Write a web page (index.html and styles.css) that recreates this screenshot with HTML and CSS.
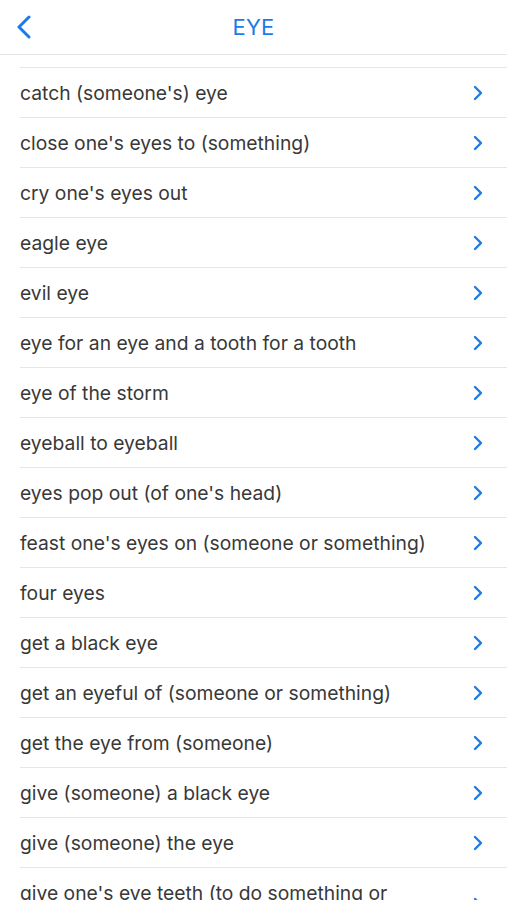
FILE: index.html
```html
<!DOCTYPE html>
<html>
<head>
<meta charset="utf-8">
<link rel="stylesheet" href="styles.css">
</head>
<body>
<header class="nav">
  <button class="back" aria-label="Back">
    <svg width="16" height="24" viewBox="0 0 16 24"><path d="M13 2 L3 12 L13 22" fill="none" stroke="#1c7be6" stroke-width="3" stroke-linecap="round" stroke-linejoin="round"/></svg>
  </button>
  <h1 class="title">EYE</h1>
</header>
<ul class="list">
  <li class="row"><span class="label">catch (someone's) eye</span><svg class="chev" width="10" height="16" viewBox="0 0 10 16"><path d="M2 2 L8 8 L2 14" fill="none" stroke="#1c7be6" stroke-width="2.4" stroke-linecap="round" stroke-linejoin="round"/></svg></li>
  <li class="row"><span class="label">close one's eyes to (something)</span><svg class="chev" width="10" height="16" viewBox="0 0 10 16"><path d="M2 2 L8 8 L2 14" fill="none" stroke="#1c7be6" stroke-width="2.4" stroke-linecap="round" stroke-linejoin="round"/></svg></li>
  <li class="row"><span class="label">cry one's eyes out</span><svg class="chev" width="10" height="16" viewBox="0 0 10 16"><path d="M2 2 L8 8 L2 14" fill="none" stroke="#1c7be6" stroke-width="2.4" stroke-linecap="round" stroke-linejoin="round"/></svg></li>
  <li class="row"><span class="label">eagle eye</span><svg class="chev" width="10" height="16" viewBox="0 0 10 16"><path d="M2 2 L8 8 L2 14" fill="none" stroke="#1c7be6" stroke-width="2.4" stroke-linecap="round" stroke-linejoin="round"/></svg></li>
  <li class="row"><span class="label">evil eye</span><svg class="chev" width="10" height="16" viewBox="0 0 10 16"><path d="M2 2 L8 8 L2 14" fill="none" stroke="#1c7be6" stroke-width="2.4" stroke-linecap="round" stroke-linejoin="round"/></svg></li>
  <li class="row"><span class="label">eye for an eye and a tooth for a tooth</span><svg class="chev" width="10" height="16" viewBox="0 0 10 16"><path d="M2 2 L8 8 L2 14" fill="none" stroke="#1c7be6" stroke-width="2.4" stroke-linecap="round" stroke-linejoin="round"/></svg></li>
  <li class="row"><span class="label">eye of the storm</span><svg class="chev" width="10" height="16" viewBox="0 0 10 16"><path d="M2 2 L8 8 L2 14" fill="none" stroke="#1c7be6" stroke-width="2.4" stroke-linecap="round" stroke-linejoin="round"/></svg></li>
  <li class="row"><span class="label">eyeball to eyeball</span><svg class="chev" width="10" height="16" viewBox="0 0 10 16"><path d="M2 2 L8 8 L2 14" fill="none" stroke="#1c7be6" stroke-width="2.4" stroke-linecap="round" stroke-linejoin="round"/></svg></li>
  <li class="row"><span class="label">eyes pop out (of one's head)</span><svg class="chev" width="10" height="16" viewBox="0 0 10 16"><path d="M2 2 L8 8 L2 14" fill="none" stroke="#1c7be6" stroke-width="2.4" stroke-linecap="round" stroke-linejoin="round"/></svg></li>
  <li class="row"><span class="label">feast one's eyes on (someone or something)</span><svg class="chev" width="10" height="16" viewBox="0 0 10 16"><path d="M2 2 L8 8 L2 14" fill="none" stroke="#1c7be6" stroke-width="2.4" stroke-linecap="round" stroke-linejoin="round"/></svg></li>
  <li class="row"><span class="label">four eyes</span><svg class="chev" width="10" height="16" viewBox="0 0 10 16"><path d="M2 2 L8 8 L2 14" fill="none" stroke="#1c7be6" stroke-width="2.4" stroke-linecap="round" stroke-linejoin="round"/></svg></li>
  <li class="row"><span class="label">get a black eye</span><svg class="chev" width="10" height="16" viewBox="0 0 10 16"><path d="M2 2 L8 8 L2 14" fill="none" stroke="#1c7be6" stroke-width="2.4" stroke-linecap="round" stroke-linejoin="round"/></svg></li>
  <li class="row"><span class="label">get an eyeful of (someone or something)</span><svg class="chev" width="10" height="16" viewBox="0 0 10 16"><path d="M2 2 L8 8 L2 14" fill="none" stroke="#1c7be6" stroke-width="2.4" stroke-linecap="round" stroke-linejoin="round"/></svg></li>
  <li class="row"><span class="label">get the eye from (someone)</span><svg class="chev" width="10" height="16" viewBox="0 0 10 16"><path d="M2 2 L8 8 L2 14" fill="none" stroke="#1c7be6" stroke-width="2.4" stroke-linecap="round" stroke-linejoin="round"/></svg></li>
  <li class="row"><span class="label">give (someone) a black eye</span><svg class="chev" width="10" height="16" viewBox="0 0 10 16"><path d="M2 2 L8 8 L2 14" fill="none" stroke="#1c7be6" stroke-width="2.4" stroke-linecap="round" stroke-linejoin="round"/></svg></li>
  <li class="row"><span class="label">give (someone) the eye</span><svg class="chev" width="10" height="16" viewBox="0 0 10 16"><path d="M2 2 L8 8 L2 14" fill="none" stroke="#1c7be6" stroke-width="2.4" stroke-linecap="round" stroke-linejoin="round"/></svg></li>
  <li class="row row-wrap"><span class="label">give one's eye teeth (to do something or have something)</span><svg class="chev" width="10" height="16" viewBox="0 0 10 16"><path d="M2 2 L8 8 L2 14" fill="none" stroke="#1c7be6" stroke-width="2.4" stroke-linecap="round" stroke-linejoin="round"/></svg></li>
</ul>
</body>
</html>
```
FILE: styles.css
```css
* { box-sizing: border-box; }
html, body {
  margin: 0;
  padding: 0;
  background: #ffffff;
  font-family: Inter, "Noto Sans", sans-serif;
  overflow: hidden;
}
.nav {
  height: 55px;
  display: flex;
  align-items: center;
  justify-content: center;
  position: relative;
  border-bottom: 1px solid #e4e4e4;
}
.back {
  position: absolute;
  left: 16px;
  top: 15px;
  width: 16px;
  height: 24px;
  padding: 0;
  border: 0;
  background: none;
  display: flex;
}
.title {
  margin: 0;
  font-size: 22px;
  font-weight: 400;
  color: #1c7be6;
  letter-spacing: 0.2px;
}
.list {
  list-style: none;
  margin: 12px 0 0 0;
  padding: 0 0 0 20px;
}
.row {
  display: flex;
  align-items: center;
  justify-content: space-between;
  min-height: 50px;
  border-top: 1px solid #e6e6e6;
  padding: 1px 24px 0 0;
}
.label {
  font-size: 19.3px;
  color: #383838;
  line-height: 24px;
  padding: 12px 0;
}
.row-wrap .label {
  padding-right: 60px;
}
.chev {
  flex: none;
}
```
